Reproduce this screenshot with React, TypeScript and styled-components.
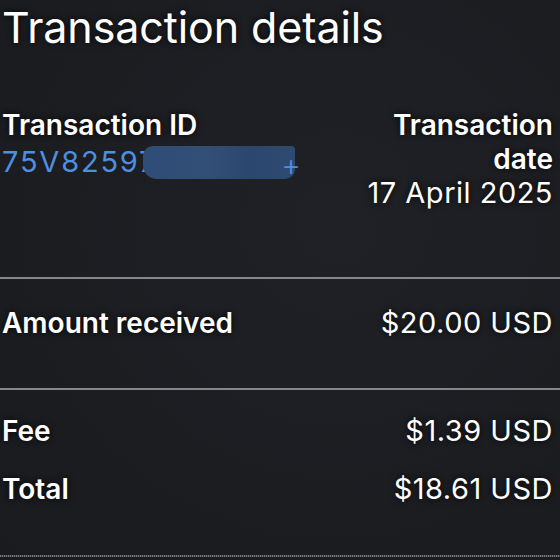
import React from "react";
import styled, { createGlobalStyle } from "styled-components";

const Global = createGlobalStyle`
  html, body { margin: 0; padding: 0; background: #1c1d21; }
  body { font-family: Inter, "Noto Sans", "Liberation Sans", sans-serif; color: #fff; }
`;

const Page = styled.div`
  width: 560px;
  height: 560px;
  box-sizing: border-box;
  padding: 2px 7px 0 2px;
  background: radial-gradient(ellipse at 60% 40%, #202126 0%, #1c1d21 60%, #1a1b1f 100%);
  display: flex;
  flex-direction: column;
  overflow: hidden;
  text-shadow: 0 0 6px rgba(0, 0, 0, 0.9);
`;

const Title = styled.h1`
  margin: 0;
  font-size: 43px;
  line-height: 50px;
  font-weight: 400;
  letter-spacing: -0.1px;
`;

const Header = styled.div`
  display: flex;
  justify-content: space-between;
  align-items: flex-start;
  margin-top: 56px;
`;

const Column = styled.div<{ $align?: "left" | "right" }>`
  display: flex;
  flex-direction: column;
  text-align: ${(p) => p.$align ?? "left"};
  align-items: ${(p) => (p.$align === "right" ? "flex-end" : "flex-start")};
`;

const Label = styled.div`
  font-size: 28px;
  line-height: 34px;
  font-weight: 600;
  letter-spacing: 0;
`;

const Value = styled.div`
  font-size: 29px;
  line-height: 34px;
  font-weight: 400;
  letter-spacing: 0.5px;
`;

const IdText = styled.div`
  font-size: 29px;
  line-height: 34px;
  font-weight: 400;
  color: #4d8fe0;
  letter-spacing: 1.8px;
  display: flex;
  align-items: center;
  text-shadow: none;
`;

const Redaction = styled.span`
  display: inline-block;
  width: 152px;
  height: 33px;
  margin-left: -14px;
  border-radius: 10px 4px 10px 14px;
  background: linear-gradient(90deg, #2e4c76 0%, #324f78 40%, #2b476f 70%, #2f4a70 100%);
`;

const Plus = styled.span`
  font-size: 30px;
  font-weight: 300;
  margin-left: -14px;
  margin-top: 6px;
`;

const Divider = styled.hr<{ $top: number }>`
  margin: ${(p) => p.$top}px 0 0 0;
  border: 0;
  height: 2px;
  background: #86878b;
  margin-right: -7px;
  margin-left: -2px;
`;

const Row = styled.div<{ $top: number }>`
  display: flex;
  justify-content: space-between;
  align-items: baseline;
  margin-top: ${(p) => p.$top}px;
`;

const BottomLine = styled.div`
  margin-top: auto;
  margin-bottom: 3px;
  margin-left: -2px;
  margin-right: -7px;
  height: 2px;
  background: repeating-linear-gradient(90deg, #77787c 0 1px, #3a3b3f 1px 2px);
`;

export default function App() {
  return (
    <>
      <Global />
      <Page>
        <Title>Transaction details</Title>
        <Header>
          <Column>
            <Label>Transaction ID</Label>
            <IdText>
              75V82597
              <Redaction />
              <Plus>+</Plus>
            </IdText>
          </Column>
          <Column $align="right">
            <Label>
              Transaction
              <br />
              date
            </Label>
            <Value>17 April 2025</Value>
          </Column>
        </Header>
        <Divider $top={67} />
        <Row $top={27}>
          <Label>Amount received</Label>
          <Value>$20.00 USD</Value>
        </Row>
        <Divider $top={48} />
        <Row $top={24}>
          <Label>Fee</Label>
          <Value>$1.39 USD</Value>
        </Row>
        <Row $top={24}>
          <Label>Total</Label>
          <Value>$18.61 USD</Value>
        </Row>
        <BottomLine />
      </Page>
    </>
  );
}
